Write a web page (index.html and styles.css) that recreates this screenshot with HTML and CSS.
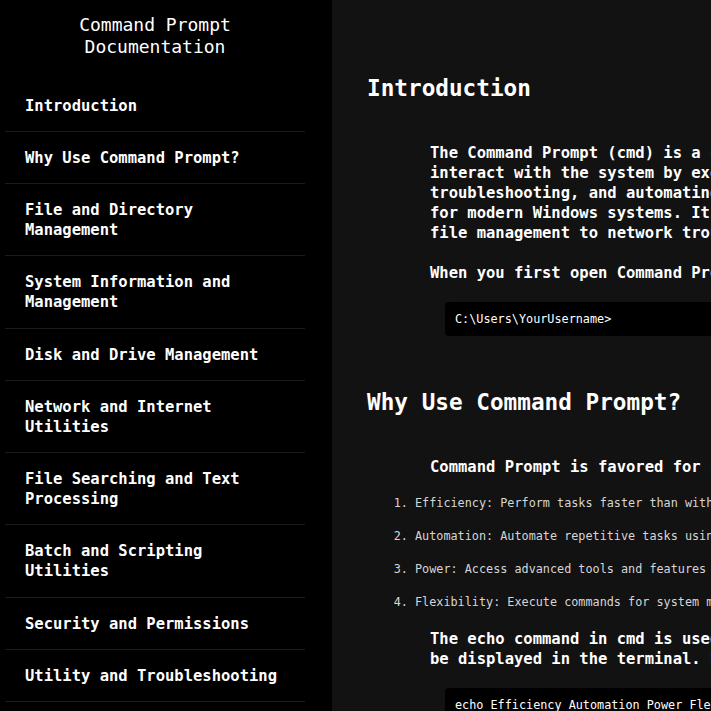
FILE: index.html
```html
<!DOCTYPE html>
<html lang="en">
<head>
<meta charset="utf-8">
<title>Command Prompt Documentation</title>
<link rel="stylesheet" href="styles.css">
</head>
<body>
<aside class="sidebar">
  <h2 class="sidebar-title">Command Prompt<br>Documentation</h2>
  <ul class="nav">
    <li class="nav-item">Introduction</li>
    <li class="nav-item">Why Use Command Prompt?</li>
    <li class="nav-item">File and Directory<br>Management</li>
    <li class="nav-item">System Information and<br>Management</li>
    <li class="nav-item">Disk and Drive Management</li>
    <li class="nav-item">Network and Internet<br>Utilities</li>
    <li class="nav-item">File Searching and Text<br>Processing</li>
    <li class="nav-item">Batch and Scripting<br>Utilities</li>
    <li class="nav-item">Security and Permissions</li>
    <li class="nav-item">Utility and Troubleshooting</li>
  </ul>
</aside>
<main class="content">
  <section class="section">
    <h1 class="section-title">Introduction</h1>
    <p class="text">The Command Prompt (cmd) is a command-line interpreter in Windows that allows users to<br>interact with the system by executing text-based commands. It is a powerful tool for<br>troubleshooting, and automating tasks, and it remains an essential utility<br>for modern Windows systems. It supports a wide range of operations, from<br>file management to network troubleshooting.<br><br>When you first open Command Prompt, you will see a prompt like this:</p>
    <pre class="code">C:\Users\YourUsername&gt;</pre>
  </section>
  <section class="section section-next">
    <h1 class="section-title">Why Use Command Prompt?</h1>
    <p class="text">Command Prompt is favored for several reasons:</p>
    <ol class="list">
      <li>Efficiency: Perform tasks faster than with a graphical interface.</li>
      <li>Automation: Automate repetitive tasks using batch scripts.</li>
      <li>Power: Access advanced tools and features not available in the GUI.</li>
      <li>Flexibility: Execute commands for system management and troubleshooting.</li>
    </ol>
    <p class="text text-after-list">The echo command in cmd is used to display messages or text that will<br>be displayed in the terminal. For example:</p>
    <pre class="code">echo Efficiency Automation Power Flexibility</pre>
  </section>
</main>
</body>
</html>
```

FILE: styles.css
```css
html, body {
  margin: 0;
  padding: 0;
  height: 100%;
}

body {
  display: flex;
  background: #121212;
  color: #ffffff;
  font-family: "DejaVu Sans Mono", "Liberation Mono", monospace;
  overflow: hidden;
}

.sidebar {
  flex: 0 0 332px;
  width: 332px;
  height: 100vh;
  background: #000000;
  padding: 14px 0 0 5px;
  box-sizing: border-box;
  overflow: hidden;
}

.sidebar-title {
  width: 300px;
  margin: 0 0 21.5px;
  font-size: 18px;
  line-height: 22px;
  font-weight: normal;
  text-align: center;
}

.nav {
  list-style: none;
  margin: 0;
  padding: 0;
  width: 300px;
}

.nav-item {
  padding: 16px 20px 15.25px;
  font-size: 15.5px;
  line-height: 20px;
  font-weight: bold;
  white-space: nowrap;
  border-bottom: 1px solid #1c1c1c;
}

.content {
  flex: 1;
  min-width: 0;
  padding: 74px 0 0 35px;
  overflow: hidden;
  white-space: nowrap;
}

.section {
  margin: 0;
}

.section-next {
  margin-top: 52px;
}

.section-title {
  margin: 0;
  font-size: 22.7px;
  line-height: 28px;
  font-weight: bold;
}

.text {
  margin: 41px 0 0 63px;
  font-size: 15.5px;
  line-height: 20px;
  font-weight: bold;
}

.list {
  margin: 18px 0 0;
  padding-left: 48px;
  font-size: 11.8px;
  line-height: 16px;
  color: #d6d6d6;
}

.list li + li {
  margin-top: 17px;
}

.text-after-list {
  margin-top: 19px;
}

.code {
  display: inline-block;
  margin: 19px 0 0 78px;
  padding: 10px 10px;
  min-width: 400px;
  background: #000000;
  border-radius: 4px;
  font-family: "DejaVu Sans Mono", "Liberation Mono", monospace;
  font-size: 11.8px;
  line-height: 14px;
  color: #ffffff;
}
```
